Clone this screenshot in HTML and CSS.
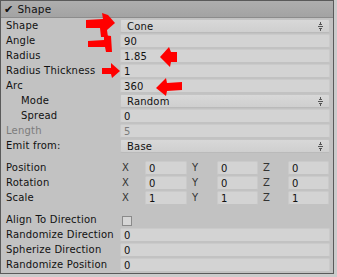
FILE: index.html
```html
<!DOCTYPE html>
<html lang="en">
<head>
    <meta charset="UTF-8">
    <title>Shape Module</title>
    <link rel="stylesheet" href="styles.css">
</head>
<body>
    <div class="panel">
        <!-- Module header -->
        <div class="header">
            <span class="check">&#10004;</span>
            <span class="title">Shape</span>
        </div>

        <div class="rows">
            <div class="row">
                <span class="label">Shape</span>
                <div class="field dropdown">Cone<span class="arrows"></span></div>
            </div>
            <div class="row">
                <span class="label">Angle</span>
                <div class="field">90</div>
            </div>
            <div class="row">
                <span class="label">Radius</span>
                <div class="field">1.85</div>
            </div>
            <div class="row">
                <span class="label">Radius Thickness</span>
                <div class="field">1</div>
            </div>
            <div class="row">
                <span class="label">Arc</span>
                <div class="field">360</div>
            </div>
            <div class="row">
                <span class="label indent">Mode</span>
                <div class="field dropdown">Random<span class="arrows"></span></div>
            </div>
            <div class="row">
                <span class="label indent">Spread</span>
                <div class="field">0</div>
            </div>
            <div class="row disabled">
                <span class="label">Length</span>
                <div class="field">5</div>
            </div>
            <div class="row">
                <span class="label">Emit from:</span>
                <div class="field dropdown">Base<span class="arrows"></span></div>
            </div>

            <!-- Transform group -->
            <div class="group">
                <div class="row">
                    <span class="label">Position</span>
                    <div class="vector">
                        <span class="axis">X</span><div class="field">0</div>
                        <span class="axis">Y</span><div class="field">0</div>
                        <span class="axis">Z</span><div class="field">0</div>
                    </div>
                </div>
                <div class="row">
                    <span class="label">Rotation</span>
                    <div class="vector">
                        <span class="axis">X</span><div class="field">0</div>
                        <span class="axis">Y</span><div class="field">0</div>
                        <span class="axis">Z</span><div class="field">0</div>
                    </div>
                </div>
                <div class="row">
                    <span class="label">Scale</span>
                    <div class="vector">
                        <span class="axis">X</span><div class="field">1</div>
                        <span class="axis">Y</span><div class="field">1</div>
                        <span class="axis">Z</span><div class="field">1</div>
                    </div>
                </div>
            </div>

            <div class="group">
                <div class="row">
                    <span class="label">Align To Direction</span>
                    <div class="toggle"><span class="box"></span></div>
                </div>
                <div class="row">
                    <span class="label">Randomize Direction</span>
                    <div class="field">0</div>
                </div>
                <div class="row">
                    <span class="label">Spherize Direction</span>
                    <div class="field">0</div>
                </div>
                <div class="row">
                    <span class="label">Randomize Position</span>
                    <div class="field">0</div>
                </div>
            </div>
        </div>

        <!-- Hand-drawn markers over the fields -->
        <svg class="marks" width="334" height="120" viewBox="0 0 334 120">
            <g fill="#f00">
                <path d="M86,20 L103,19 L102,13 L108,15 L115,23 L107,30 L108,37 L101,37 L100,28 L86,28 Z"/>
                <path d="M88,41 L104,40 L104,35 L111,36 L112,52 L106,52 L105,47 L88,47 Z"/>
                <path d="M160,57 L169,47 L171,52 L177,52 L177,62 L171,62 L170,67 Z"/>
                <path d="M102,68 L111,68 L111,63 L120,71 L112,78 L111,74 L102,74 Z"/>
                <path d="M156,88 L166,78 L167,83 L182,82 L182,90 L167,91 L166,96 Z"/>
            </g>
        </svg>
    </div>
</body>
</html>
```

FILE: styles.css
```css
/* Page */
body {
    margin: 0;
    background-color: #cbcbcb;
    font-family: "DejaVu Sans", Verdana, sans-serif;
    font-size: 10px;
    letter-spacing: 0.2px;
    color: #111;
}

/* Inspector panel */
.panel {
    position: relative;
    width: 332px;
    border: 1px solid #5a5a5a;
    background-color: #c2c2c2;
}

/* Header bar */
.header {
    height: 16px;
    display: flex;
    align-items: center;
    gap: 4px;
    padding-left: 3px;
    background: linear-gradient(#aeaeae, #a3a3a3);
    border-bottom: 1px solid #8c8c8c;
}

.check {
    font-size: 11px;
    font-weight: bold;
    color: #111;
}

.title {
    font-size: 10.5px;
}

.rows {
    padding-top: 1px;
}

.group {
    margin-top: 7px;
}

/* One property row */
.row {
    height: 15px;
    display: flex;
    align-items: flex-start;
}

.label {
    width: 114px;
    padding-left: 5px;
    line-height: 14px;
    white-space: nowrap;
}

.label.indent {
    width: 99px;
    padding-left: 20px;
}

.disabled .label,
.disabled .field {
    color: #7c7c7c;
}

/* Value fields */
.field {
    position: relative;
    box-sizing: border-box;
    width: 210px;
    height: 14px;
    line-height: 13px;
    padding-left: 3px;
    background-color: #d3d3d3;
    border: 1px solid #cacaca;
    border-bottom-color: #c2c2c2;
    border-radius: 2px;
}

.dropdown {
    padding-left: 6px;
    background: linear-gradient(#d8d8d8, #cfcfcf);
    border-color: #c4c4c4;
    border-bottom-color: #bababa;
}

/* Small up/down arrows of a popup */
.arrows {
    position: absolute;
    right: 6px;
    top: 2px;
    width: 5px;
    height: 9px;
    background:
        linear-gradient(#555, #555) center 4px / 5px 1px no-repeat,
        conic-gradient(from 150deg at 50% 0, #555 60deg, transparent 0) top / 5px 3px no-repeat,
        conic-gradient(from -30deg at 50% 100%, #555 60deg, transparent 0) bottom / 5px 3px no-repeat;
}

/* X / Y / Z triples */
.vector {
    width: 210px;
    display: grid;
    grid-template-columns: 25px 42px 30px 41px 30px 41px;
}

.vector .field {
    width: auto;
}

.axis {
    padding-left: 5px;
    line-height: 14px;
    color: #333;
}

.axis:first-child {
    padding-left: 2px;
}

/* Checkbox */
.toggle {
    padding: 3px 0 0 2px;
}

.box {
    display: block;
    width: 8px;
    height: 8px;
    border: 1px solid #8a8a8a;
    background-color: #d6d6d6;
}

/* Red annotations */
.marks {
    position: absolute;
    left: -1px;
    top: -1px;
    pointer-events: none;
}
```
